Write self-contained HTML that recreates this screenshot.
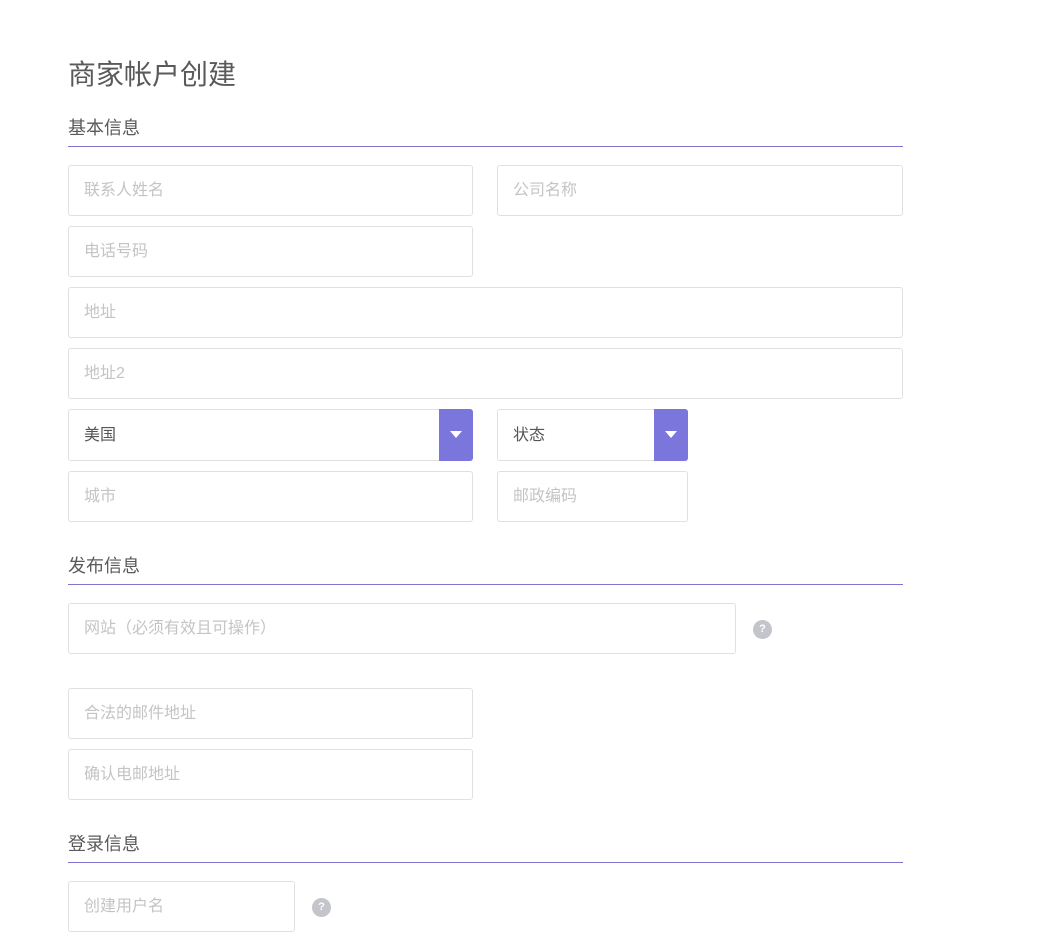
<!DOCTYPE html>
<html><head><meta charset="utf-8"><style>
body{margin:0;width:1064px;height:936px;background:#fff;font-family:"Liberation Sans","Noto Sans CJK SC",sans-serif;position:relative;overflow:hidden}
h1{position:absolute;left:68px;top:56px;margin:0;font-size:28px;font-weight:normal;color:#5a5a5a;line-height:38px}
.st{position:absolute;left:68px;font-size:18px;color:#5a5a5a;line-height:24px}
.ln{position:absolute;left:68px;width:835px;height:1px;background:#7e76cf}
.in{position:absolute;box-sizing:border-box;height:51px;border:1px solid #e0e0e0;border-radius:3px;padding-left:15px;line-height:49px;font-size:16px;color:#c4c4c4}
.sel{color:#555}
.btn{position:absolute;top:-1px;right:-1px;width:34px;height:51px;background:#7b76dc;border-radius:0 3px 3px 0}
.btn:after{content:"";position:absolute;left:11px;top:22px;border-left:6px solid transparent;border-right:6px solid transparent;border-top:7px solid #fff}
.q{position:absolute;width:19px;height:19px;border-radius:50%;background:#c3c5cb;color:#fff;font-size:11px;font-weight:bold;text-align:center;line-height:19px}
</style></head><body>
<h1>商家帐户创建</h1>
<div class="st" style="top:116px">基本信息</div><div class="ln" style="top:146px"></div>
<div class="in" style="left:68px;top:165px;width:405px">联系人姓名</div>
<div class="in" style="left:497px;top:165px;width:406px">公司名称</div>
<div class="in" style="left:68px;top:226px;width:405px">电话号码</div>
<div class="in" style="left:68px;top:287px;width:835px">地址</div>
<div class="in" style="left:68px;top:348px;width:835px">地址2</div>
<div class="in sel" style="left:68px;top:409px;width:405px;height:52px;line-height:51px">美国<div class="btn" style="height:52px"></div></div>
<div class="in sel" style="left:497px;top:409px;width:191px;height:52px;line-height:51px">状态<div class="btn" style="height:52px"></div></div>
<div class="in" style="left:68px;top:471px;width:405px">城市</div>
<div class="in" style="left:497px;top:471px;width:191px">邮政编码</div>
<div class="st" style="top:554px">发布信息</div><div class="ln" style="top:584px"></div>
<div class="in" style="left:68px;top:603px;width:668px">网站（必须有效且可操作）</div>
<div class="q" style="left:753px;top:620px">?</div>
<div class="in" style="left:68px;top:688px;width:405px">合法的邮件地址</div>
<div class="in" style="left:68px;top:749px;width:405px">确认电邮地址</div>
<div class="st" style="top:832px">登录信息</div><div class="ln" style="top:862px"></div>
<div class="in" style="left:68px;top:881px;width:227px">创建用户名</div>
<div class="q" style="left:312px;top:898px">?</div>
</body></html>
